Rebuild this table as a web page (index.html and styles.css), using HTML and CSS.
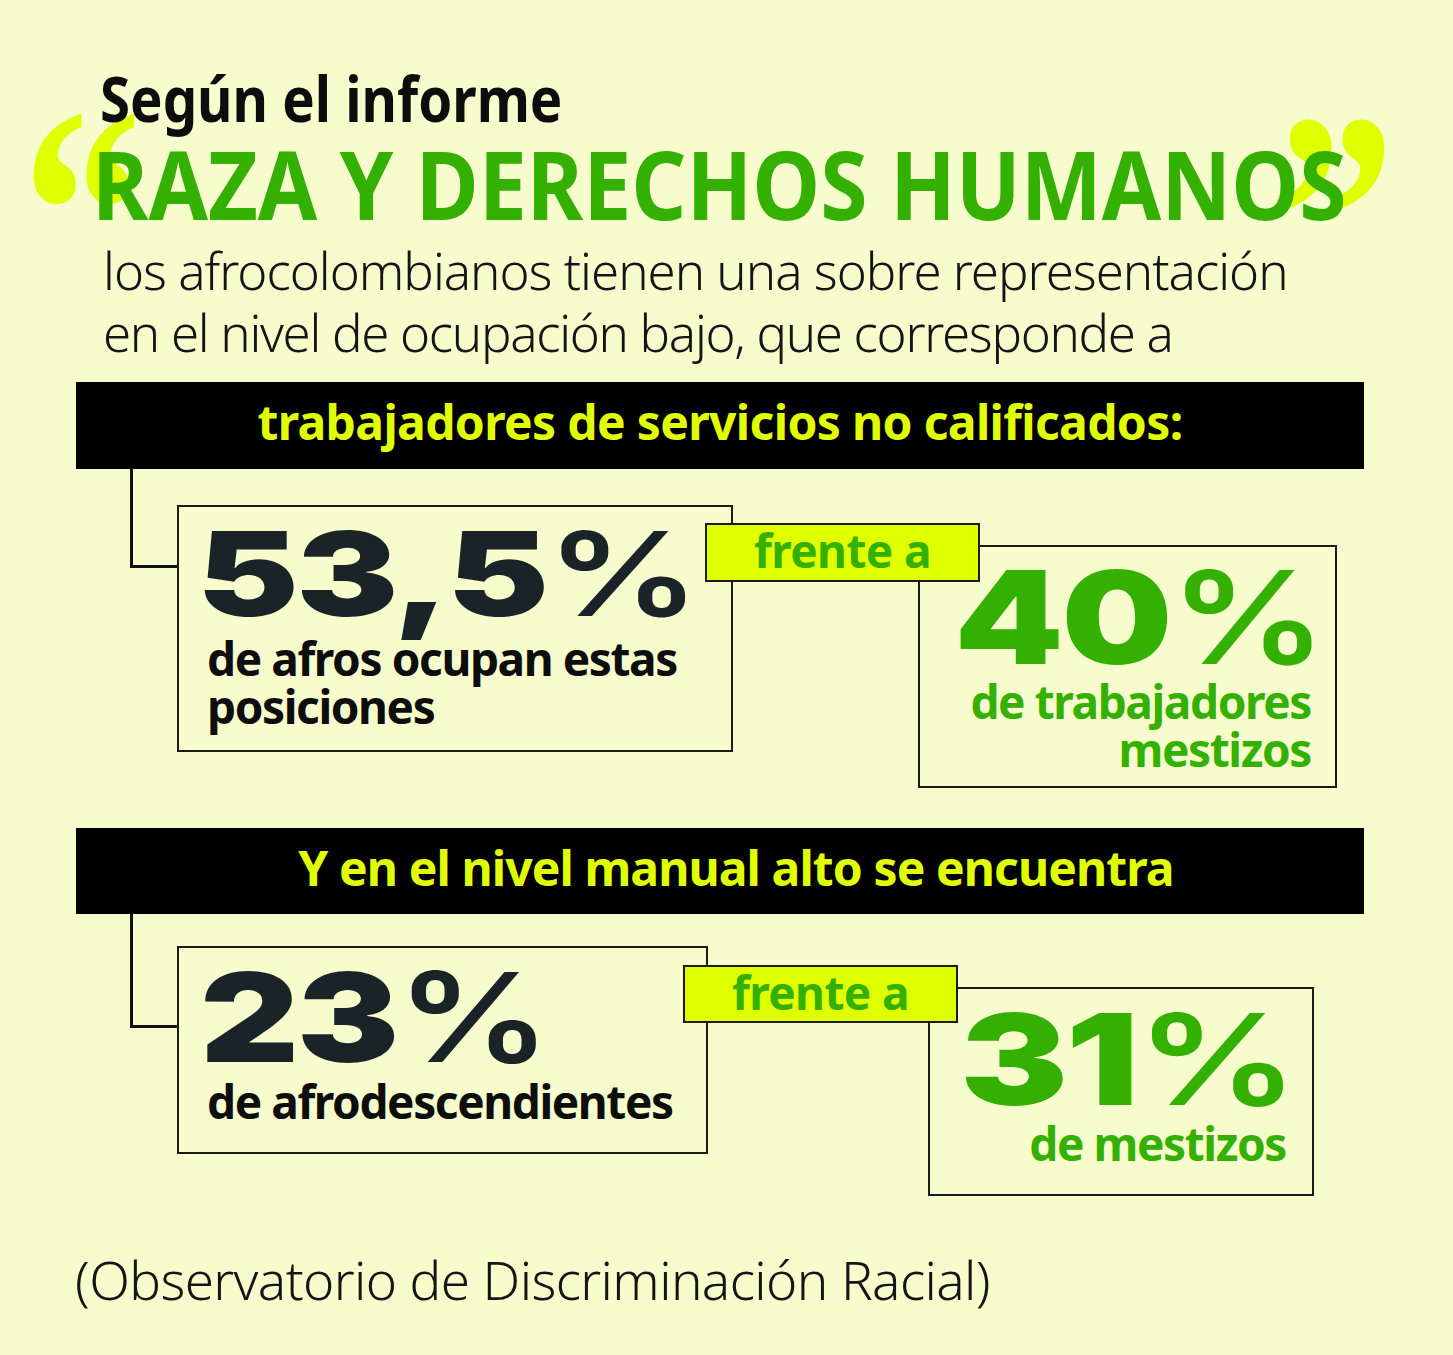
FILE: index.html
```html
<!DOCTYPE html>
<html lang="es">
<head>
<meta charset="utf-8">
<title>Raza y derechos humanos</title>
<link rel="stylesheet" href="styles.css">
</head>
<body>
<div class="page">
  <header class="head">
    <p class="kicker"><span class="kicker-text">Según el informe</span></p>
    <h1 class="title"><span class="q q-open">“</span><span class="q q-close">”</span><span class="title-text">RAZA Y DERECHOS HUMANOS</span></h1>
    <p class="intro"><span class="intro-1">los afrocolombianos tienen una sobre representación</span><br><span class="intro-2">en el nivel de ocupación bajo, que corresponde a</span></p>
  </header>

  <section class="sec">
    <div class="bar"><span>trabajadores de servicios no calificados:</span></div>
    <div class="row row-1">
      <div class="conn conn-1"></div>
      <div class="card card-a1">
        <div class="num num-a1"><span class="num-in">53,5<span class="pct">%</span></span></div>
        <p class="card-text">de afros ocupan estas<br>posiciones</p>
      </div>
      <div class="compare compare-1">
        <div class="tag">frente a</div>
        <div class="card card-m1">
          <div class="num num-m1 green"><span class="num-in">40<span class="pct">%</span></span></div>
          <p class="card-text green right">de trabajadores<br>mestizos</p>
        </div>
      </div>
    </div>
  </section>

  <section class="sec sec-2">
    <div class="bar bar-2"><span>Y en el nivel manual alto se encuentra</span></div>
    <div class="row row-2">
      <div class="conn conn-2"></div>
      <div class="card card-a2">
        <div class="num num-a2"><span class="num-in">23<span class="pct">%</span></span></div>
        <p class="card-text">de afrodescendientes</p>
      </div>
      <div class="compare compare-2">
        <div class="tag tag-2">frente a</div>
        <div class="card card-m2">
          <div class="num num-m2 green"><span class="num-in">31<span class="pct">%</span></span></div>
          <p class="card-text green right">de mestizos</p>
        </div>
      </div>
    </div>
  </section>

  <p class="source">(Observatorio de Discriminación Racial)</p>
</div>
</body>
</html>
```

FILE: styles.css
```css
html, body {
  margin: 0;
  padding: 0;
  background: #f7fccd;
}

.page {
  width: 1453px;
  height: 1355px;
  overflow: hidden;
  font-family: "Noto Sans", "Open Sans", sans-serif;
  color: #111;
}

p, h1 { margin: 0; }

.head {
  padding-top: 67px;
}

.kicker {
  position: relative;
  z-index: 2;
  margin-left: 100px;
  font-size: 62px;
  line-height: 62px;
  font-weight: 700;
  white-space: nowrap;
  color: #0d0d0d;
}

.kicker-text {
  display: inline-block;
  transform: scaleX(0.88);
  transform-origin: left center;
}

.title {
  position: relative;
  margin-top: 7px;
  padding-left: 92px;
  font-size: 95px;
  line-height: 95px;
  font-weight: 700;
  color: #34b000;
  white-space: nowrap;
}

.title-text {
  position: relative;
  z-index: 1;
  display: inline-block;
  transform: scaleX(0.905);
  transform-origin: left center;
}

.q {
  position: absolute;
  font-family: "Liberation Serif", "DejaVu Serif", serif;
  font-size: 300px;
  line-height: 1;
  font-weight: 700;
  color: #e0ff00;
  z-index: 0;
  transform: scaleX(0.8);
  transform-origin: left top;
}

.q-open { left: 22px; top: -74px; }
.q-close { left: 1275px; top: -68px; }

.intro {
  margin-top: 8px;
  margin-left: 103px;
  font-size: 51px;
  line-height: 62px;
  font-weight: 300;
  white-space: nowrap;
  color: #151515;
}

.intro-1 { letter-spacing: -1px; }
.intro-2 { letter-spacing: -1.3px; }

.sec {
  margin-top: 19px;
}

.sec-2 {
  margin-top: 40px;
}

.bar {
  margin-left: 76px;
  width: 1288px;
  height: 87px;
  background: #000;
  display: flex;
  align-items: center;
  justify-content: center;
  box-sizing: border-box;
  padding-bottom: 8px;
  color: #e0ff00;
  font-size: 48px;
  font-weight: 700;
  white-space: nowrap;
  letter-spacing: -0.65px;
}

.bar-2 {
  height: 86px;
  padding-left: 32px;
  letter-spacing: -0.9px;
}

.row {
  display: flex;
  align-items: flex-start;
  padding-left: 130px;
}

.row-1 { height: 319px; }
.row-2 { height: 282px; }

.conn {
  width: 47px;
  box-sizing: border-box;
  border-left: 3px solid #111;
  border-bottom: 3px solid #111;
  flex: none;
}

.conn-1 { height: 99px; }
.conn-2 { height: 114px; }

.card {
  box-sizing: border-box;
  border: 2px solid #1b1b1b;
  flex: none;
}

.card-a1 {
  width: 556px;
  height: 247px;
  margin-top: 36px;
  padding: 17px 0 0 18px;
}

.card-a2 {
  width: 531px;
  height: 208px;
  margin-top: 32px;
  padding: 19px 0 0 21px;
}

.compare {
  display: flex;
  flex-direction: column;
  align-items: flex-start;
  flex: none;
}

.compare-1 { margin-left: -28px; margin-top: 54px; }
.compare-2 { margin-left: -25px; margin-top: 51px; }

.tag {
  position: relative;
  z-index: 1;
  width: 275px;
  height: 59px;
  box-sizing: border-box;
  border: 2px solid #1b1b1b;
  background: #e0ff00;
  color: #34b000;
  font-size: 46px;
  font-weight: 700;
  line-height: 50px;
  text-align: center;
  white-space: nowrap;
  letter-spacing: -0.6px;
}

.tag-2 { height: 58px; }

.card-m1 {
  width: 419px;
  height: 243px;
  margin-left: 213px;
  margin-top: -37px;
  padding: 20px 8px 0 0;
}

.card-m2 {
  width: 386px;
  height: 209px;
  margin-left: 245px;
  margin-top: -36px;
  padding: 20px 13px 0 0;
}

.card-m1 .card-text { padding-right: 16px; }
.card-m2 .card-text { padding-right: 13px; }

.num {
  font-family: "Inter", "DejaVu Sans", sans-serif;
  font-weight: 900;
  line-height: 100px;
  color: #1a2428;
  white-space: nowrap;
  letter-spacing: -2px;
}

.pct {
  font-weight: 600;
  letter-spacing: 0;
}

.num-in {
  display: inline-block;
  transform-origin: left center;
}

.num-a1 { font-size: 117px; }
.num-a1 .num-in { transform: scaleX(1.307); }

.num-a2 { font-size: 124px; }
.num-a2 .num-in { transform: scaleX(1.237); }

.num-m1 { font-size: 129px; text-align: right; }
.num-m1 .num-in { transform: scaleX(1.21); transform-origin: right center; }

.num-m2 { font-size: 126px; text-align: right; }
.num-m2 .num-in { transform: scaleX(1.284); transform-origin: right center; }

.num.green { color: #34b000; }

.card-text {
  margin-top: 10px;
  margin-left: 10px;
  font-size: 46px;
  line-height: 48px;
  font-weight: 700;
  color: #0d0d0d;
  white-space: nowrap;
  letter-spacing: -1.4px;
}

.card-a2 .card-text { margin-left: 7px; }

.card-text.green { color: #34b000; }
.card-text.right { text-align: right; margin-left: 0; }

.source {
  margin-left: 75px;
  margin-top: 53px;
  font-size: 53px;
  line-height: 62px;
  font-weight: 300;
  color: #151515;
  white-space: nowrap;
  letter-spacing: -0.6px;
}
```
